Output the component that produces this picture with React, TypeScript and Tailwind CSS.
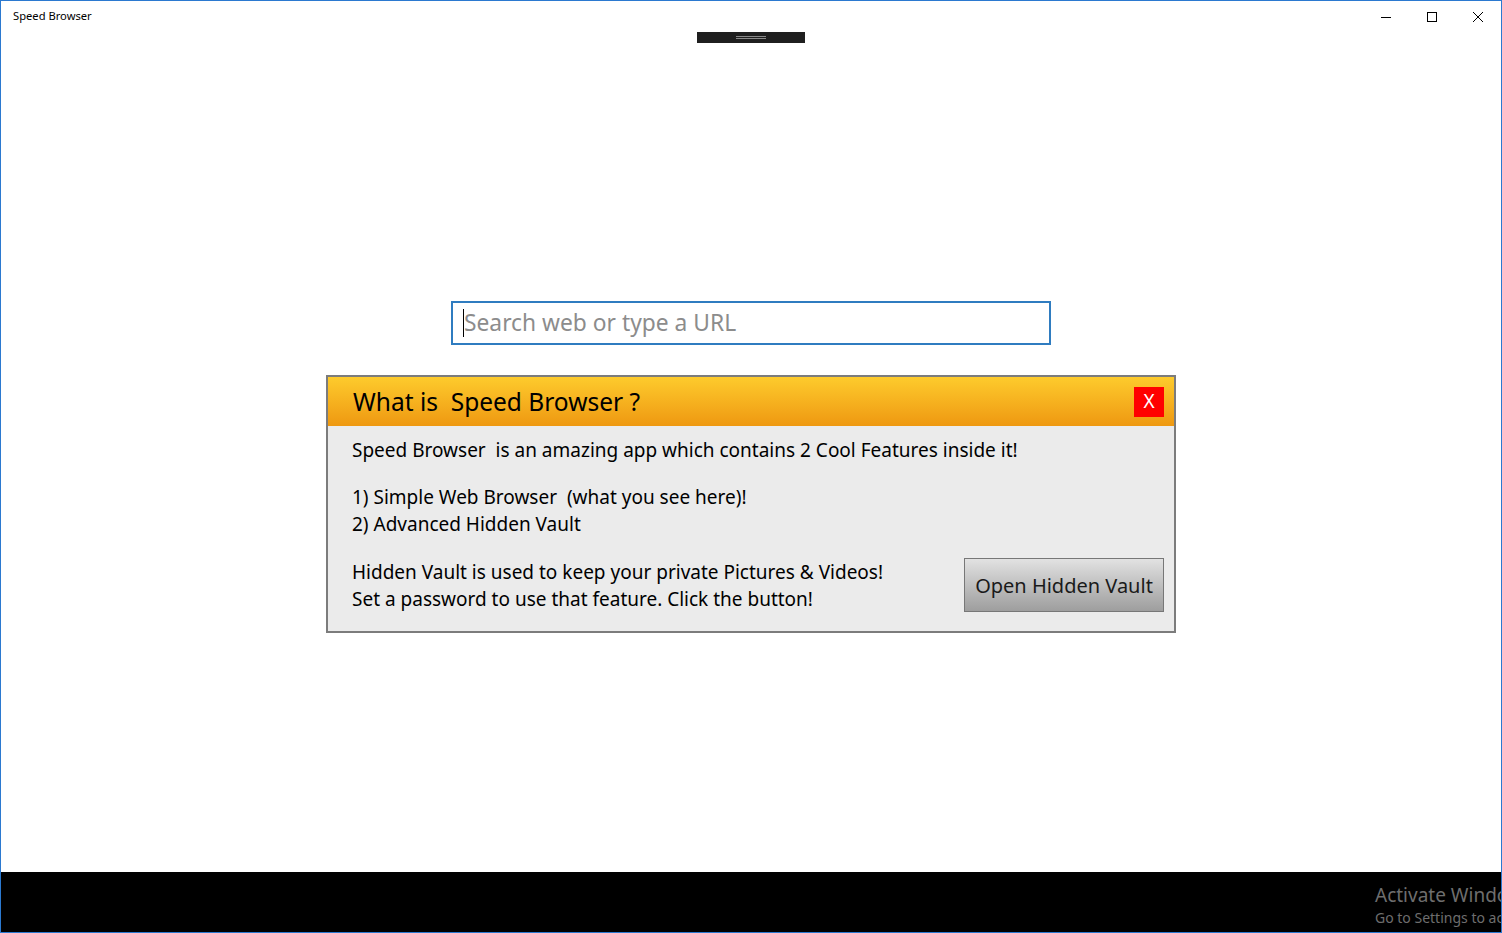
export default function App() {
  return (
    <div
      className="w-[1502px] h-[933px] flex flex-col border border-[#2b79d0] bg-white overflow-hidden"
      style={{ fontFamily: '"Noto Sans", "Open Sans", sans-serif' }}
    >
      {/* title bar */}
      <div className="h-[31px] flex items-center shrink-0">
        <span className="pl-[12px] text-[11.2px] text-black -mt-[1px]">Speed Browser</span>
        <div className="ml-auto flex h-full">
          <button className="w-[46px] h-full flex items-center justify-center">
            <svg width="10" height="10" viewBox="0 0 10 10">
              <path d="M0 5.5h10" stroke="#000" strokeWidth="1" />
            </svg>
          </button>
          <button className="w-[46px] h-full flex items-center justify-center">
            <svg width="10" height="10" viewBox="0 0 10 10">
              <rect x="0.5" y="0.5" width="9" height="9" fill="none" stroke="#000" strokeWidth="1" />
            </svg>
          </button>
          <button className="w-[46px] h-full flex items-center justify-center">
            <svg width="10" height="10" viewBox="0 0 10 10">
              <path d="M0 0L10 10M10 0L0 10" stroke="#000" strokeWidth="1" />
            </svg>
          </button>
        </div>
      </div>

      {/* content */}
      <div className="flex-1 flex flex-col items-center">
        <div className="w-[108px] h-[11px] bg-[#1f1f1f] flex flex-col items-center justify-center gap-[1px]">
          <div className="w-[30px] h-px bg-[#8a8a8a]" />
          <div className="w-[30px] h-px bg-[#8a8a8a]" />
        </div>

        <div className="mt-[258px] w-[600px] h-[44px] border-2 border-[#2f7cc0] flex items-center pl-[10px]">
          <div className="w-px h-[28px] bg-black" />
          <span className="text-[22.8px] text-[#8c8c8c] leading-none">Search web or type a URL</span>
        </div>

        <div className="mt-[30px] w-[850px] border-2 border-[#7c7c7c] bg-[#ebebeb]">
          <div className="h-[49px] bg-gradient-to-b from-[#fdcb2c] to-[#ee9810] flex items-center pl-[25px] pr-[10px]">
            <span className="text-[24.5px] text-black mt-[1px]">What is&nbsp; Speed Browser ?</span>
            <button className="ml-auto w-[30px] h-[30px] bg-[#ff0000] text-white text-[19px] flex items-center justify-center leading-none">
              X
            </button>
          </div>
          <div className="pl-[24px] pr-[10px] pt-[11px] pb-[18px] text-[19px] leading-[27px] text-black">
            <p>Speed Browser&nbsp; is an amazing app which contains 2 Cool Features inside it!</p>
            <p className="mt-[20px]">1) Simple Web Browser&nbsp; (what you see here)!</p>
            <p>2) Advanced Hidden Vault</p>
            <div className="mt-[20px] flex items-end">
              <div>
                <p>Hidden Vault is used to keep your private Pictures &amp; Videos!</p>
                <p>Set a password to use that feature. Click the button!</p>
              </div>
              <button className="ml-auto mb-[1px] w-[200px] h-[54px] border border-[#777] bg-gradient-to-b from-[#e2e2e2] to-[#9e9e9e] text-[20px] text-[#1a1a1a]">
                Open Hidden Vault
              </button>
            </div>
          </div>
        </div>
      </div>

      {/* bottom bar */}
      <div className="h-[60px] bg-black shrink-0 relative overflow-hidden">
        <div className="absolute left-[1374px] top-[11px] whitespace-nowrap text-[#6e6e6e]">
          <div className="text-[19px] leading-[24px]">Activate Windows</div>
          <div className="text-[14px] leading-[22px]">Go to Settings to activate Windows.</div>
        </div>
      </div>
    </div>
  );
}
